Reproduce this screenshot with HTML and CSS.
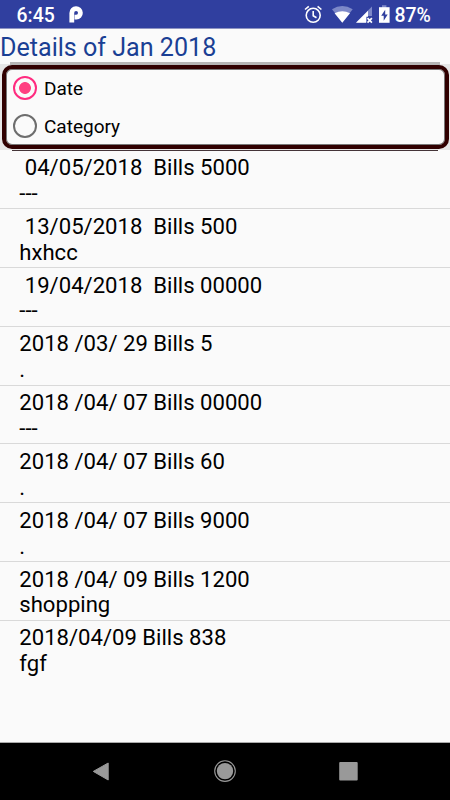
FILE: index.html
```html
<!DOCTYPE html>
<html lang="en">
<head>
  <meta charset="utf-8">
  <title>Details</title>
  <link rel="stylesheet" href="styles.css">
</head>
<body>
  <div class="status">
    <span class="time">6:45</span>
    <svg class="p-icon" width="14" height="18" viewBox="0 0 14 18">
      <path d="M2.8 16.6V7a4.3 4.3 0 1 1 4.5 4.2H5.6" fill="none" stroke="#fff" stroke-width="4.8"/>
    </svg>
    <svg class="right-icons" width="100" height="28" viewBox="0 0 100 28">
      <g fill="none" stroke="#fff" stroke-width="1.6">
        <circle cx="13.2" cy="15.3" r="7"/>
        <path d="M13.2 11v4.8l3.3 2M5 9.5l3.8-3.2M21.4 9.5l-3.8-3.2"/>
      </g>
      <path d="M32 9.3Q42.3 2.8 52.7 9.3L42.3 22.5z" fill="#7d88c8"/>
      <path d="M34.6 13.2Q42.3 9.4 50 13.2L42.3 22.8z" fill="#fff"/>
      <path d="M56 22.5L72 6.5v9.5h-5v6.5z" fill="#7d88c8"/>
      <path d="M56 22.8L68 10.8v6h-2v6z" fill="#fff"/>
      <path d="M67.5 18.2l4.4 4.4M71.9 18.2l-4.4 4.4" stroke="#fff" stroke-width="1.7"/>
      <path d="M82 5.2h4.4V8H82z" fill="#7d88c8"/>
      <path d="M79 7.2h10.6v15.6H79z" fill="#fff"/>
      <path d="M85.2 9.7l-4 6h2.5v5l4-6.3h-2.5z" fill="#303f9f"/>
    </svg>
    <span class="percent">87%</span>
  </div>

  <h1>Details of Jan 2018</h1>

  <div class="frame">
    <div class="options">
      <div class="option checked"><span class="radio"></span>Date</div>
      <div class="option"><span class="radio"></span>Category</div>
    </div>
  </div>

  <ul class="list">
    <li> 04/05/2018  Bills 5000<br>---</li>
    <li> 13/05/2018  Bills 500<br>hxhcc</li>
    <li> 19/04/2018  Bills 00000<br>---</li>
    <li>2018 /03/ 29 Bills 5<br>.</li>
    <li>2018 /04/ 07 Bills 00000<br>---</li>
    <li>2018 /04/ 07 Bills 60<br>.</li>
    <li>2018 /04/ 07 Bills 9000<br>.</li>
    <li>2018 /04/ 09 Bills 1200<br>shopping</li>
    <li>2018/04/09 Bills 838<br>fgf</li>
  </ul>

  <div class="nav">
    <svg width="24" height="24" viewBox="0 0 24 24">
      <path d="M3.3 12.4L18.2 4v17z" fill="#999" stroke="#999" stroke-linejoin="round"/>
    </svg>
    <svg width="24" height="24" viewBox="0 0 24 24">
      <circle cx="12" cy="12.1" r="10.3" fill="none" stroke="#999" stroke-width="1.1"/>
      <circle cx="12" cy="12.1" r="8.2" fill="#999"/>
    </svg>
    <svg width="24" height="24" viewBox="0 0 24 24">
      <rect x="3.2" y="3" width="18.5" height="18.5" rx="1" fill="#999"/>
    </svg>
  </div>
</body>
</html>
```
FILE: styles.css
```css
body {
  margin: 0;
  height: 800px;
  display: flex;
  flex-direction: column;
  background: #fafafa;
  font-family: Roboto, sans-serif;
  color: #000;
  overflow: hidden;
}

.status {
  height: 28px;
  flex: none;
  display: flex;
  align-items: center;
  background: #303f9f;
  border-bottom: 1px solid #8d93c2;
  color: #fff;
  font-size: 19.4px;
  font-weight: 500;
}

.time {
  width: 52px;
  padding: 2px 0 0 16.5px;
}

.p-icon {
  margin-top: 1px;
}

.right-icons {
  margin-left: 217.5px;
}

.percent {
  margin-left: -5.5px;
  padding-top: 2px;
}

h1 {
  height: 33px;
  flex: none;
  margin: 0;
  padding-top: 1px;
  box-sizing: border-box;
  font-size: 25.1px;
  font-weight: 400;
  line-height: 35px;
  color: #1a3f94;
}

.frame {
  height: 89px;
  flex: none;
  box-sizing: border-box;
  padding: 3px 1px 1px 2px;
  background:
    linear-gradient(#b5b5b5, #b5b5b5) 10px 0 / 430px 3px no-repeat,
    linear-gradient(#443438, #443438) 12px 88px / 426px 1px no-repeat,
    linear-gradient(#e6e6e6, #e6e6e6) 0 2px / 450px 86px no-repeat;
}

.options {
  height: 84px;
  box-sizing: border-box;
  border: 4px solid #300000;
  border-radius: 10px;
  box-shadow: inset 0 0 0 1px #777;
  background: #fafafa;
  padding: 0 0 0 7px;
}

.option {
  height: 38px;
  display: flex;
  align-items: center;
  font-size: 19px;
}

.radio {
  width: 24px;
  height: 24px;
  box-sizing: border-box;
  border: 2px solid #6d6d6d;
  border-radius: 50%;
  margin-right: 7px;
}

.checked .radio {
  border-color: #ff2b7f;
  background: radial-gradient(circle, #ff4081 5.5px, transparent 6.3px);
}

.list {
  flex: 1;
  margin: 0;
  padding: 0;
  list-style: none;
}

.list li {
  height: 58.8px;
  box-sizing: border-box;
  padding: 4.6px 0 0 19.3px;
  border-bottom: 1px solid #d9d9d9;
  font-size: 22.1px;
  line-height: 25.8px;
  white-space: pre;
}

.list li:first-child {
  height: 58.2px;
  padding-top: 4px;
}

.list li:last-child {
  border-bottom: none;
}

.nav {
  height: 58px;
  flex: none;
  box-sizing: border-box;
  border-top: 1px solid #aaa;
  display: flex;
  justify-content: space-between;
  align-items: center;
  padding: 0 90px 2px;
  background: #000;
}
```
